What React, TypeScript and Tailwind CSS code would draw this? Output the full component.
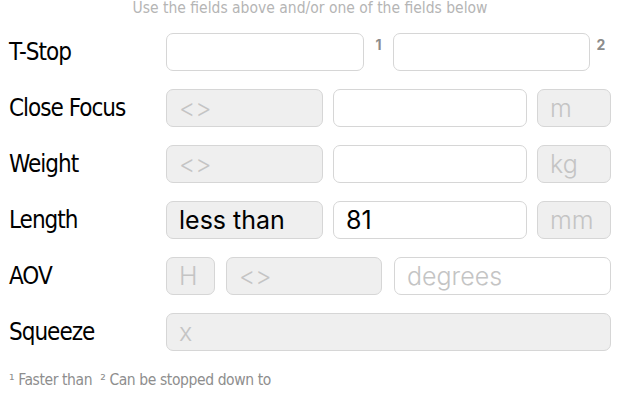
import React from 'react';

const labelFont = {
  fontFamily: "'DejaVu Sans Condensed', 'DejaVu Sans', sans-serif",
  fontStretch: 'condensed',
};
const fieldFont = { fontFamily: "Inter, 'Liberation Sans', sans-serif" };

type FieldProps = {
  w: string;
  filled?: boolean;
  text?: string;
  placeholder?: string;
};

const Field = ({ w, filled, text, placeholder }: FieldProps) => (
  <div
    className={`${w} h-[38px] shrink-0 rounded-[7px] border border-[#d6d6d6] flex items-center px-3 text-[25px] leading-none ${
      filled ? 'bg-[#efefef]' : 'bg-white'
    }`}
    style={fieldFont}
  >
    {text ? (
      <span className="text-black">{text}</span>
    ) : (
      <span className="text-[#c4c4c4] font-light">{placeholder}</span>
    )}
  </div>
);

const Sup = ({ n, w }: { n: string; w: string }) => (
  <span className={`${w} self-start pt-[1px] text-[14px] font-bold text-[#8c8c8c] text-center`} style={fieldFont}>
    {n}
  </span>
);

const Row = ({ label, children }: { label: string; children: React.ReactNode }) => (
  <div className="flex items-center h-[38px]">
    <div className="w-[157px] pr-2 text-[24px] tracking-[-1px] text-black leading-none" style={labelFont}>
      {label}
    </div>
    <div className="flex items-center">{children}</div>
  </div>
);

export default function App() {
  return (
    <div className="w-[620px] h-[420px] bg-white overflow-hidden relative">
      <div
        className="absolute -top-[3px] left-0 right-0 text-center text-[15.5px] text-[#b5b5b5]"
        style={labelFont}
      >
        Use the fields above and/or one of the fields below
      </div>
      <div className="pt-[33px] pl-[9px] flex flex-col gap-[18px]">
        <Row label="T-Stop">
          <Field w="w-[198px]" />
          <Sup n="1" w="w-[29px]" />
          <Field w="w-[197px]" />
          <Sup n="2" w="w-[22px]" />
        </Row>
        <Row label="Close Focus">
          <Field w="w-[157px]" filled placeholder="<>" />
          <div className="w-[10px]" />
          <Field w="w-[194px]" />
          <div className="w-[10px]" />
          <Field w="w-[74px]" filled placeholder="m" />
        </Row>
        <Row label="Weight">
          <Field w="w-[157px]" filled placeholder="<>" />
          <div className="w-[10px]" />
          <Field w="w-[194px]" />
          <div className="w-[10px]" />
          <Field w="w-[74px]" filled placeholder="kg" />
        </Row>
        <Row label="Length">
          <Field w="w-[157px]" filled text="less than" />
          <div className="w-[10px]" />
          <Field w="w-[194px]" text="81" />
          <div className="w-[10px]" />
          <Field w="w-[74px]" filled placeholder="mm" />
        </Row>
        <Row label="AOV">
          <Field w="w-[49px]" filled placeholder="H" />
          <div className="w-[11px]" />
          <Field w="w-[156px]" filled placeholder="<>" />
          <div className="w-[12px]" />
          <Field w="w-[217px]" placeholder="degrees" />
        </Row>
        <Row label="Squeeze">
          <Field w="w-[445px]" filled placeholder="x" />
        </Row>
      </div>
      <div className="pl-[9px] mt-[18px] text-[15.5px] tracking-[-0.4px] text-[#8e8e8e]" style={labelFont}>
        ¹ Faster than &nbsp;² Can be stopped down to
      </div>
    </div>
  );
}
